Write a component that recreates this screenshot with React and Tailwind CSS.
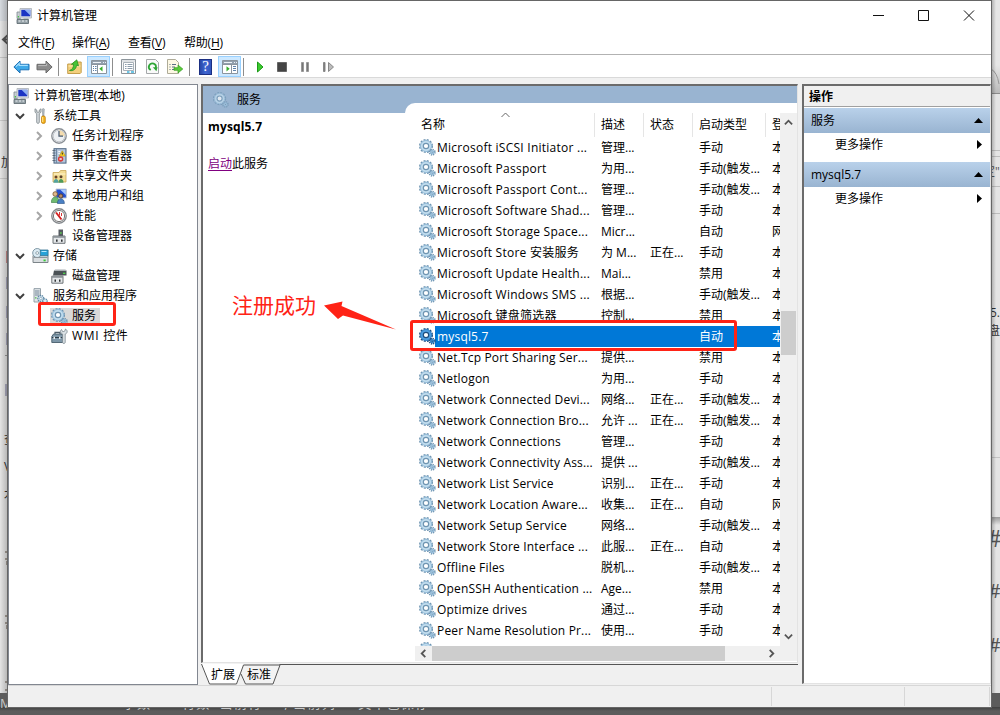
import React from "react";

const FONT = "font-['Open_Sans','Noto_Sans_CJK_SC',sans-serif]";

/* ---------- icons ---------- */

function Gear({ selected = false, faded = false, size = 17 }) {
  const ring = selected ? "#2f7fc4" : "#8fb8d6";
  const light = selected ? "#4f9fe0" : "#c3deef";
  const edge = selected ? "#1d4f80" : "#6f95b2";
  return (
    <svg width={size} height={size} viewBox="0 0 17 17" className={"block shrink-0 " + (faded ? "opacity-70" : "")}>
      <circle cx="7" cy="7" r="5.9" fill="none" stroke={edge} strokeWidth="2.2" strokeDasharray="1.9 1.19" />
      <circle cx="7" cy="7" r="4.2" fill="none" stroke={light} strokeWidth="3.2" />
      <circle cx="7" cy="7" r="5.5" fill="none" stroke={ring} strokeWidth="0.9" />
      <circle cx="7" cy="7" r="2.7" fill="#fff" stroke={edge} strokeWidth="1.2" />
      <circle cx="13.2" cy="13.2" r="2.6" fill="none" stroke={edge} strokeWidth="1.9" strokeDasharray="1.2 0.84" />
      <circle cx="13.2" cy="13.2" r="1.6" fill={light} stroke={ring} strokeWidth="1.2" />
      <circle cx="13.2" cy="13.2" r=".7" fill={edge} />
    </svg>
  );
}

function Computer() {
  return (
    <svg width="16" height="16" viewBox="0 0 16 16" className="block shrink-0">
      <path d="M1 4h3.500v6.500H1z" fill="#c9cfd4" stroke="#7d8890" strokeWidth=".8" />
      <path d="M1.800 8h1.200v1.500H1.800z" fill="#45c644" />
      <path d="M4 .5h11.500v9.500H4z" fill="#dfe3e6" stroke="#a9b0b6" strokeWidth=".8" />
      <path d="M5.300 1.800h9v6.500h-9z" fill="#1b34c4" />
      <path d="M8.500 1.800h5.800v5.700z" fill="#8fb0f2" />
      <path d="M7.500 10h5v1.500h-5z" fill="#b9bfc4" />
      <path d="M1 11.500h11.500v4H1z" fill="#96a2a8" stroke="#56636a" strokeWidth=".8" />
      <path d="M2.500 13h2M6 13h2M9.500 13h1.500" stroke="#eef2f4" />
    </svg>
  );
}

function Tools() {
  return (
    <svg width="13" height="16" viewBox="0 0 13 16" className="block shrink-0">
      <path d="M1 .8v3.400l1.700 1.600v8.400c0 1.600 2.600 1.600 2.600 0V5.800L7 4.200V.8L5.300 2v2.200H2.800V2z" fill="#d5dadd" stroke="#7c868c" strokeWidth=".8" />
      <path d="M8.300 1l1-.6 1 .6-.4 7h-1.200z" fill="#b7bec4" stroke="#7c868c" strokeWidth=".5" />
      <rect x="7.500" y="8" width="3.800" height="7.400" rx="1.400" fill="#f5b21b" stroke="#b97808" strokeWidth=".7" />
      <path d="M8.700 9v5" stroke="#ffe79a" />
    </svg>
  );
}

function Clock() {
  return (
    <svg width="16" height="16" viewBox="0 0 16 16" className="block shrink-0">
      <circle cx="8" cy="8" r="7.200" fill="#fff" stroke="#8b9096" strokeWidth="1.400" />
      <circle cx="8" cy="8" r="5.800" fill="#eef1f4" stroke="#b4bac0" strokeWidth=".8" />
      <path d="M8 8V2.300A5.700 5.700 0 0 1 13.700 8z" fill="#f4dcae" />
      <path d="M8 3v5.200h4" fill="none" stroke="#46586e" strokeWidth="1.200" />
    </svg>
  );
}

function EventViewer() {
  return (
    <svg width="15" height="16" viewBox="0 0 15 16" className="block shrink-0">
      <rect x="2" y=".7" width="12" height="14.400" fill="#b4c6dc" stroke="#4d6580" />
      <path d="M4.500 1v14" stroke="#6f88a3" />
      <path d="M.5 2.500h3M.5 5h3M.5 7.500h3M.5 10h3M.5 12.500h3" stroke="#5c6c7d" />
      <path d="M6.300 3.600h2M6.300 5.600h1.500" stroke="#fff" />
      <path d="M10.300 2.800l3 5.300H7.300z" fill="#ffd52a" stroke="#b98f00" strokeWidth=".6" />
      <path d="M10.300 4.600v2" stroke="#222" />
      <circle cx="8.600" cy="11" r="2.700" fill="#d83a36" />
      <path d="M7.600 10l2 2M9.600 10l-2 2" stroke="#fff" strokeWidth=".9" />
    </svg>
  );
}

function SharedFolder() {
  return (
    <svg width="15" height="15" viewBox="0 0 15 15" className="block shrink-0">
      <path d="M1 3.500h6L8.500 1.500H14v11.500H1z" fill="#f3dc94" stroke="#c9a655" strokeWidth=".8" />
      <path d="M2 5h11.500" stroke="#fff4cc" />
      <circle cx="4" cy="8" r="1.500" fill="#6b4528" />
      <path d="M1.500 13.800c0-5 5-5 5 0z" fill="#52a3a0" />
      <circle cx="9" cy="7.700" r="1.500" fill="#59402c" />
      <path d="M6.500 13.800c0-5 5-5 5 0z" fill="#4d9a5b" />
    </svg>
  );
}

function Users() {
  return (
    <svg width="16" height="16" viewBox="0 0 16 16" className="block shrink-0">
      <path d="M5 1h10.400v9H5z" fill="#2450cf" stroke="#c4ccd4" />
      <path d="M9 1.600h5.900v5.500z" fill="#a9c8fa" />
      <circle cx="4.200" cy="6" r="2.300" fill="#e0b98a" stroke="#79542e" strokeWidth=".8" />
      <path d="M.3 14.500c0-7.500 8-7.500 8 0z" fill="#6fba70" stroke="#357941" strokeWidth=".6" />
      <circle cx="9.800" cy="8" r="2.100" fill="#b98a5f" stroke="#4d3624" strokeWidth=".8" />
      <path d="M6.400 15.500c0-6.500 7-6.500 7 0z" fill="#4a80c4" stroke="#294f83" strokeWidth=".6" />
    </svg>
  );
}

function Perf() {
  return (
    <svg width="16" height="16" viewBox="0 0 16 16" className="block shrink-0">
      <circle cx="8" cy="8" r="7.200" fill="#fff" stroke="#85898d" strokeWidth="1.400" />
      <circle cx="8" cy="8" r="5.600" fill="#fff" stroke="#555" strokeWidth=".8" />
      <path d="M5 4.500l5.500 7" stroke="#d31f1f" strokeWidth="1.900" />
      <path d="M8.500 4v3.500M10.500 5v3" stroke="#d31f1f" strokeWidth=".9" />
    </svg>
  );
}

function DeviceManager() {
  return (
    <svg width="14" height="15" viewBox="0 0 14 15" className="block shrink-0">
      <path d="M6.500.5h4.500v6.500H6.500z" fill="#555b60" />
      <path d="M8.300 3h1.200v2H8.300z" fill="#60d253" />
      <path d="M1 7h12v7.300H1z" fill="#e4e7e9" stroke="#60666a" strokeWidth=".9" />
      <path d="M1 7h12v1.800H1z" fill="#8d9499" />
      <path d="M4 10.500h1.600v2.300H4zM9 10.500h1.600v2.300H9z" fill="#2f3336" />
    </svg>
  );
}

function Storage() {
  return (
    <svg width="17" height="16" viewBox="0 0 17 16" className="block shrink-0">
      <path d="M1 8l1.500-3H14l2 3v6.500H1z" fill="#d9dde0" stroke="#7c8489" />
      <circle cx="5.200" cy="5" r="4.500" fill="#dcebf3" stroke="#8199a6" />
      <circle cx="5.200" cy="5" r="1.400" fill="#fff" stroke="#6d8693" strokeWidth=".7" />
      <path d="M8.300 2h7.800v5.700H8.300z" fill="#27a2d8" stroke="#31708f" strokeWidth=".8" />
      <path d="M9.500 3.500h5" stroke="#b3e8ff" />
      <path d="M1.500 9.500h14" stroke="#8f979c" />
      <path d="M11.500 11.500h2.200v1.800h-2.200z" fill="#35c937" />
    </svg>
  );
}

function DiskManager() {
  return (
    <svg width="16" height="15" viewBox="0 0 16 15" className="block shrink-0">
      <path d="M3 1.500h12.500v5H2z" fill="#4b5256" />
      <path d="M3 2l1-1.500h10.500l1 1.500z" fill="#abb1b5" />
      <path d="M12 3.700h2.300v1.200H12z" fill="#50de4c" />
      <path d="M.8 7.200h11.200v7H.8z" fill="#e4e7e9" stroke="#60666a" strokeWidth=".9" />
      <path d="M.8 7.200h11.200v1.600H.8z" fill="#8d9499" />
      <path d="M3.500 10.500H5v2.300H3.500zM8 10.500h1.500v2.300H8z" fill="#2f3336" />
    </svg>
  );
}

function ServicesApps() {
  return (
    <svg width="15" height="16" viewBox="0 0 15 16" className="block shrink-0">
      <path d="M1 .6h6.500V14H1z" fill="#e0e5e8" stroke="#8b98a1" strokeWidth=".9" />
      <path d="M2 3h4.500M2 5h4.500M2 7h4.500" stroke="#74889a" />
      <path d="M2 9.200h1.500v1.400H2z" fill="#52be4d" />
      <circle cx="7.800" cy="10.500" r="3" fill="#d6e7f2" stroke="#5f89a5" strokeWidth="1.300" strokeDasharray="1.400 .7" />
      <circle cx="7.800" cy="10.500" r="1.200" fill="#fff" stroke="#6b91ab" strokeWidth=".6" />
      <circle cx="12" cy="13" r="2.200" fill="#d6e7f2" stroke="#5f89a5" strokeWidth="1.200" strokeDasharray="1.100 .6" />
    </svg>
  );
}

function Wmi() {
  return (
    <svg width="17" height="16" viewBox="0 0 17 16" className="block shrink-0">
      <path d="M4 6V4.300h5V6" fill="none" stroke="#4a5a66" strokeWidth="1.200" />
      <path d="M.8 8.500L2.500 6H11l1 2.500v6H.8z" fill="#7e97a8" stroke="#475d6c" strokeWidth=".9" />
      <path d="M1 9.500h11" stroke="#2d3e4a" />
      <path d="M2.500 8.800H4V11H2.500zM8 8.800h1.500V11H8z" fill="#e9eef1" />
      <path d="M10.500 1.500l1.200 2.300 2-.6L14.500 1c2.600 1.500 1.900 4.600-.3 5v8.500c-.2 1.300-2.600 1.300-2.600 0V6C9 5 9 2.500 10.500 1.500z" fill="#dbe2e6" stroke="#7c8990" strokeWidth=".8" />
    </svg>
  );
}

function BlueArrow() {
  return (
    <svg width="17" height="14" viewBox="0 0 17 14" className="block shrink-0">
      <path d="M.9 7L7 1v3.300h9v5.500H7V13z" fill="#3fa9e8" stroke="#1c6fb4" strokeLinejoin="round" />
      <path d="M3 6.600L6.200 3.400v2h8.600" fill="none" stroke="#a5e0ff" strokeWidth="1.100" />
    </svg>
  );
}

function GrayArrow() {
  return (
    <svg width="17" height="14" viewBox="0 0 17 14" className="block shrink-0">
      <path d="M16.100 7L10 1v3.300H1v5.500h9V13z" fill="#8c8c8c" stroke="#686868" strokeLinejoin="round" />
      <path d="M2.200 5.600h8.400v-2" fill="none" stroke="#bdbdbd" />
    </svg>
  );
}

function UpFolder() {
  return (
    <svg width="15" height="15" viewBox="0 0 15 15" className="block shrink-0">
      <path d="M.7 5h5l1.500-2h7v10.500l-1 1H.7z" fill="#f3cf7d" stroke="#c0963f" strokeWidth=".9" />
      <path d="M1.500 7h12" stroke="#ffebae" />
      <path d="M2.500 11.500c3-1 4-3 4-6.200H4.400L9.800.8l1.700 6-1.800-.6c-.6 3.500-3 6.300-7.200 5.300z" fill="#47c436" stroke="#218a18" strokeWidth=".7" />
    </svg>
  );
}

function PaneIcon({ flip = false }) {
  return (
    <svg width="16" height="14" viewBox="0 0 16 14" className="block shrink-0">
      <path d="M.5.5h15v13H.5z" fill="#fff" stroke="#8a949d" />
      <path d="M1 1h14v3H1z" fill="#93a0ad" />
      <path d="M2 2.500h8M12 2.500h1M14 2.500h1" stroke="#eef3f7" />
      {flip ? (
        <>
          <path d="M9.500 4v9.500M1 4.500h14" stroke="#8a949d" />
          <path d="M4.500 6.200v5.200L7.700 8.800z" fill="#37ae2c" />
          <path d="M11 6.500h3M11 8.500h3M11 10.500h3" stroke="#5f83ab" />
        </>
      ) : (
        <>
          <path d="M6.500 4v9.500M1 4.500h14" stroke="#8a949d" />
          <path d="M11.500 6.200v5.200L8.300 8.800z" fill="#37ae2c" />
          <path d="M2 6.500h1M4 6.500h1.500M2 8.500h1M4 8.500h1.500M2 10.500h1M4 10.500h1.500" stroke="#5f83ab" />
        </>
      )}
    </svg>
  );
}

function Properties() {
  return (
    <svg width="15" height="15" viewBox="0 0 15 15" className="block shrink-0">
      <path d="M.5.5h14v14H.5z" fill="#fbfbfb" stroke="#8d959b" />
      <path d="M1 2h13" stroke="#c3c9ce" />
      <path d="M2.500 3.500h10v8h-10z" fill="#fff" stroke="#a8b1b8" />
      <path d="M4 5.500h1.500M6.500 5.500h5M4 7.500h1.500M6.500 7.500h5M4 9.500h1.500M6.500 9.500h5" stroke="#8c9dac" />
      <path d="M6 13h2.500M10 13h3" stroke="#3fb5e0" strokeWidth="1.300" />
    </svg>
  );
}

function Refresh() {
  return (
    <svg width="13" height="15" viewBox="0 0 13 15" className="block shrink-0">
      <path d="M.5.5h9l3 3v11H.5z" fill="#fafafa" stroke="#a5a8aa" />
      <path d="M4.700 11A3.500 3.500 0 1 1 9.700 9" fill="none" stroke="#2fa637" strokeWidth="1.800" />
      <path d="M6.800 8.200h4.800l-1.200 4z" fill="#2fa637" />
    </svg>
  );
}

function Export() {
  return (
    <svg width="17" height="15" viewBox="0 0 17 15" className="block shrink-0">
      <path d="M.5.5h8l3 3v11H.5z" fill="#fdf8e4" stroke="#aeab98" />
      <path d="M2.500 5.500h1M5 5.500h4M2.500 8h1M5 8h3M2.500 10.500h1M5 10.500h4" stroke="#5b6e86" />
      <path d="M7 8.700h4V6l4.800 4-4.800 4v-2.700H7z" fill="#5ccc3b" stroke="#309b21" strokeWidth=".7" />
    </svg>
  );
}

function Help() {
  return (
    <span className="flex h-4 w-[13px] items-center justify-center border border-[#1b2f82] bg-linear-to-r from-[#2848a8] via-[#3f66d2] to-[#3156bd] font-['Liberation_Serif',serif] text-[15px] leading-none text-white">
      ?
    </span>
  );
}

function Chevron({ dir, color = "#555", w = 9 }) {
  const paths = {
    down: "M1 3l4 4 4-4",
    up: "M1 7l4-4 4 4",
    right: "M3 1l4 4-4 4",
    left: "M7 1L3 5l4 4",
  };
  return (
    <svg width={w} height={w} viewBox="0 0 10 10" className="block shrink-0">
      <path d={paths[dir]} fill="none" stroke={color} strokeWidth="2" />
    </svg>
  );
}

/* ---------- backdrop seen round the window ---------- */

function Backdrop() {
  return (
    <div className="absolute inset-0 overflow-hidden bg-[#e4e4e4] text-[12px] leading-4 text-[#333]">
      <div className="absolute top-0 left-0 h-[21px] w-2 bg-[#d6dadf]" />
      <div className="absolute top-0 left-2 h-px w-[992px] bg-[#55504f]" />
      <svg className="absolute top-[33px] left-px" width="8" height="13" viewBox="0 0 8 13">
        <path d="M8 1L2 6.500 8 12M2 6.500h6" fill="none" stroke="#555" strokeWidth="2" />
      </svg>
      <div className="absolute top-[57px] left-0 h-px w-2 bg-[#c4c4c4]" />
      <div className="absolute top-[120px] left-0 h-px w-2 bg-[#c8c8c8]" />
      <div className="absolute top-[155px] left-px">加</div>
      <div className="absolute top-[178px] left-0 h-px w-2 bg-[#c8c8c8]" />
      <div className="absolute top-[251px] left-[6px] h-3 w-px bg-[#c78b8b]" />
      <div className="absolute top-[277px] left-[6px] h-3 w-px bg-[#a7a7bd]" />
      <div className="absolute top-[306px] left-[6px] h-3 w-px bg-[#a7a7bd]" />
      <div className="absolute top-[333px] left-[6px] h-3 w-px bg-[#a7a7bd]" />
      <div className="absolute top-[355px] left-[5px] h-px w-[3px] bg-[#999]" />
      <div className="absolute top-[384px] left-[5px] h-3 w-[3px] bg-[#a9a9bd]" />
      <div className="absolute top-[432px] left-[4px]">查</div>
      <div className="absolute top-[459px] left-[4px]">V</div>
      <div className="absolute top-[487px] left-[4px]">木</div>
      <div className="absolute top-[551px] left-[5px] h-[2px] w-[3px] bg-[#a39c94]" />
      <div className="absolute top-[558px] left-[5px] h-[2px] w-[3px] bg-[#a39c94]" />
      <div className="absolute top-[561px] left-[6px] h-1 w-px bg-[#a39c94]" />
      <div className="absolute top-[615px] left-[5px] h-[2px] w-[3px] bg-[#a39c94]" />
      <div className="absolute top-[622px] left-[5px] h-[2px] w-[3px] bg-[#a39c94]" />
      <div className="absolute top-[625px] left-[6px] h-1 w-px bg-[#a39c94]" />
      <div className="absolute top-[681px] left-[5px] h-[2px] w-[3px] bg-[#a39c94]" />
      <div className="absolute top-[689px] left-[5px] h-[2px] w-[3px] bg-[#a39c94]" />
      <div className="absolute top-0 left-0 h-[693px] w-2 bg-linear-to-r from-transparent to-[#00000038]" />

      <div className="absolute top-0 right-0 h-[94px] w-[9px] border-b border-[#8b8b8b] bg-linear-to-b from-[#e6e6e6] from-70% to-[#bababa]" />
      <svg className="absolute top-[66px] left-[991px]" width="9" height="20" viewBox="0 0 9 20">
        <path d="M0 3Q6 6 8 18" fill="none" stroke="#999" />
      </svg>
      <div className="absolute top-[150px] right-0 h-px w-[9px] bg-[#bdbdbd]" />
      <div className="absolute top-[156px] right-0 h-px w-[9px] bg-[#bdbdbd]" />
      <div className="absolute top-[164px] left-[983px] text-[#555]">定"</div>
      <div className="absolute top-[186px] right-0 h-px w-[9px] bg-[#bdbdbd]" />
      <div className="absolute top-[213px] right-0 h-px w-[9px] bg-[#bdbdbd]" />
      <div className="absolute top-[305px] left-[990px] text-[12px]">5.</div>
      <div className="absolute top-[323px] left-[988px]">盘</div>
      <div className="absolute top-[457px] right-0 h-px w-[9px] bg-[#c4c4c4]" />
      <div className="absolute top-[517px] right-0 h-2 w-[9px] bg-linear-to-b from-[#999] to-[#e4e4e4]" />
      <div className="absolute top-[526px] left-[987px] text-[23px] leading-6 text-[#555]">#</div>
      <div className="absolute top-[579px] left-[988px] text-[20px] leading-6 text-[#555]">#</div>
      <div className="absolute top-[633px] left-[988px] text-[20px] leading-6 text-[#555]">#</div>
      <div className="absolute top-0 left-[991px] h-[693px] w-[5px] bg-linear-to-r from-[#00000045] to-transparent" />

      <div className="absolute right-0 bottom-0 left-0 h-[22px] bg-[#5c5c5c]" />
      <div className="absolute right-0 bottom-0 left-0 h-2 bg-linear-to-b from-[#00000050] to-transparent to-50%" />
      <div className="absolute top-[695px] left-0 text-[13px] tracking-[1.2px] whitespace-nowrap text-[#c8c8c8]">
        Markdown&nbsp; 1850 字数&nbsp; 60 行数&nbsp; 当前行 60, 当前列 0&nbsp; 文章已保存15:04:40
      </div>
    </div>
  );
}

/* ---------- window chrome ---------- */

function TitleBar() {
  return (
    <div className="flex h-[29px] shrink-0 items-center bg-white pl-2">
      <Computer />
      <span className="ml-[5px] grow text-[12px]">计算机管理</span>
      <svg width="120" height="29" viewBox="0 0 120 29" className="block shrink-0">
        <path d="M2 14.500h11M47.500 9.500h10v10h-10zM93 9.500l10 10M103 9.500l-10 10" fill="none" stroke="#111" />
      </svg>
    </div>
  );
}

function MenuItem({ label, hotkey, className = "w-10" }) {
  return (
    <span className={"whitespace-nowrap tracking-[-0.2px] " + className}>
      {label}(<u className="underline-offset-2">{hotkey}</u>)
    </span>
  );
}

function MenuBar() {
  return (
    <div className="flex h-6 shrink-0 items-center gap-4 bg-white pt-[2px] pl-[10px] text-[12px]">
      <MenuItem label="文件" hotkey="F" className="w-[38px]" />
      <MenuItem label="操作" hotkey="A" />
      <MenuItem label="查看" hotkey="V" />
      <MenuItem label="帮助" hotkey="H" />
    </div>
  );
}

function Divider({ className }) {
  return <span className={"h-[18px] w-px shrink-0 bg-[#8d8d8d] " + className} />;
}

function ToolBar() {
  return (
    <div className="flex h-[24px] shrink-0 items-center border-t border-b border-t-[#b2b2b2] border-b-[#d9d9d9] bg-white pt-px">
      <span className="ml-[5px]"><BlueArrow /></span>
      <span className="ml-[6px]"><GrayArrow /></span>
      <Divider className="ml-[5px]" />
      <span className="ml-[8px]"><UpFolder /></span>
      <span className="ml-[5px] flex h-[21px] w-[23px] items-center justify-center border border-[#99d1ff] bg-[#cce8ff]">
        <PaneIcon />
      </span>
      <Divider className="ml-[2px]" />
      <span className="ml-2"><Properties /></span>
      <span className="ml-[10px]"><Refresh /></span>
      <span className="ml-2"><Export /></span>
      <Divider className="ml-[5px]" />
      <span className="ml-[9px]"><Help /></span>
      <span className="ml-[6px] flex h-[21px] w-[23px] items-center justify-center border border-[#99d1ff] bg-[#cce8ff]">
        <PaneIcon flip />
      </span>
      <Divider className="ml-[2px]" />
      <svg width="90" height="14" viewBox="0 0 90 14" className="ml-3 block shrink-0">
        <path d="M1.500 2v10l5.500-5z" fill="#3ccb2e" stroke="#1b9a17" />
        <path d="M21.500 2.500h9v9h-9z" fill="#444" stroke="#666" />
        <path d="M45.500 2.500h2v9h-2zM50.500 2.500h2v9h-2z" fill="#777" stroke="#999" />
        <path d="M67.500 2.500h1.500v9h-1.500z" fill="#777" stroke="#888" />
        <path d="M72.500 2.500v9l5-4.500z" fill="#bbb" stroke="#888" />
      </svg>
    </div>
  );
}

/* ---------- tree ---------- */

const TREE = [
  { label: "系统工具", icon: Tools, level: 0, open: true },
  { label: "任务计划程序", icon: Clock, level: 1, arrow: true },
  { label: "事件查看器", icon: EventViewer, level: 1, arrow: true },
  { label: "共享文件夹", icon: SharedFolder, level: 1, arrow: true },
  { label: "本地用户和组", icon: Users, level: 1, arrow: true },
  { label: "性能", icon: Perf, level: 1, arrow: true },
  { label: "设备管理器", icon: DeviceManager, level: 1 },
  { label: "存储", icon: Storage, level: 0, open: true },
  { label: "磁盘管理", icon: DiskManager, level: 1 },
  { label: "服务和应用程序", icon: ServicesApps, level: 0, open: true },
  { label: "服务", icon: Gear, level: 1, selected: true },
  { label: "WMI 控件", icon: Wmi, level: 1, wide: true },
];

function Tree() {
  return (
    <div className="h-[601px] w-[190px] shrink-0 border border-[#828790] bg-white pt-px text-[12px]">
      <div className="flex h-5 items-center pl-1">
        <Computer />
        <span className="ml-[5px] tracking-[-0.05px]">计算机管理(本地)</span>
      </div>
      {TREE.map(({ label, icon: Icon, level, open, arrow, selected, wide }) => (
        <div key={label} className={"flex h-5 items-center " + (level ? "pl-[25px]" : "pl-[6px]")}>
          <span className="flex w-[10px] shrink-0 justify-center">
            {open && <Chevron dir="down" color="#404040" w={10} />}
            {arrow && <Chevron dir="right" color="#a6a6a6" w={10} />}
          </span>
          <span
            className={
              "flex h-4 shrink-0 items-center justify-center " +
              (level ? "ml-[6px] w-[18px] " : "ml-[6px] w-[19px] ") +
              (selected ? "bg-[#d9d9d9]" : "")
            }
          >
            <Icon />
          </span>
          <span
            className={
              "flex h-4 items-center pr-1 whitespace-nowrap " +
              (level ? "pl-[4px] " : "pl-[3px] ") +
              (wide ? "tracking-[0.7px] " : "") +
              (selected ? "bg-[#d9d9d9]" : "")
            }
          >
            {label}
          </span>
        </div>
      ))}
    </div>
  );
}

/* ---------- services list ---------- */

const M = "手动";
const MT = "手动(触发...";
const A = "自动";
const D = "禁用";
const R = "正在...";

const ROWS = [
  ["Microsoft iSCSI Initiator ...", "管理...", "", M, "本"],
  ["Microsoft Passport", "为用...", "", MT, "本"],
  ["Microsoft Passport Cont...", "管理...", "", MT, "本"],
  ["Microsoft Software Shad...", "管理...", "", M, "本"],
  ["Microsoft Storage Space...", "Micr...", "", A, "网"],
  ["Microsoft Store 安装服务", "为 M...", R, M, "本"],
  ["Microsoft Update Health...", "Mai...", "", D, "本"],
  ["Microsoft Windows SMS ...", "根据...", "", MT, "本"],
  ["Microsoft 键盘筛选器", "控制...", "", D, "本"],
  ["mysql5.7", "", "", A, "本"],
  ["Net.Tcp Port Sharing Ser...", "提供...", "", D, "本"],
  ["Netlogon", "为用...", "", M, "本"],
  ["Network Connected Devi...", "网络...", R, MT, "本"],
  ["Network Connection Bro...", "允许 ...", R, MT, "本"],
  ["Network Connections", "管理...", "", M, "本"],
  ["Network Connectivity Ass...", "提供 ...", "", MT, "本"],
  ["Network List Service", "识别...", R, M, "本"],
  ["Network Location Aware...", "收集...", R, A, "网"],
  ["Network Setup Service", "网络...", "", MT, "本"],
  ["Network Store Interface ...", "此服...", R, A, "本"],
  ["Offline Files", "脱机...", "", MT, "本"],
  ["OpenSSH Authentication ...", "Age...", "", D, "本"],
  ["Optimize drives", "通过...", "", M, "本"],
  ["Peer Name Resolution Pr...", "使用...", "", M, "本"],
];

const COLS = "grid grid-cols-[180px_49px_49px_73px_14px]";

function ServiceList() {
  return (
    <div className="flex h-[533px] w-[365px] flex-col overflow-hidden text-[12px]">
      <div className={COLS + " h-6 shrink-0 items-center"}>
        <span className="relative flex h-6 items-center border-r border-[#e5e5e5] pl-[6px]">
          名称
          <svg className="absolute top-[-1px] left-[86px]" width="9" height="6" viewBox="0 0 9 6">
            <path d="M.5 5l4-4 4 4" fill="none" stroke="#666" />
          </svg>
        </span>
        <span className="flex h-6 items-center border-r border-[#e5e5e5] pl-[6px]">描述</span>
        <span className="flex h-6 items-center border-r border-[#e5e5e5] pl-[6px]">状态</span>
        <span className="flex h-6 items-center border-r border-[#e5e5e5] pl-[6px]">启动类型</span>
        <span className="flex h-6 w-[14px] items-center overflow-hidden pl-[6px]">登</span>
      </div>
      {ROWS.map(([name, desc, state, start, logon]) => {
        const sel = name === "mysql5.7";
        return (
          <div
            key={name}
            className={
              COLS +
              " h-[21px] shrink-0 items-center whitespace-nowrap " +
              (sel ? "bg-[linear-gradient(to_right,#fff_20px,#0078d7_20px)] text-white" : "")
            }
          >
            <span className="flex items-center pl-[4px]">
              <Gear selected={sel} />
              <span className={"ml-px " + (name.startsWith("Micro") ? "tracking-[0.25px]" : "tracking-[0.18px]")}>{name}</span>
            </span>
            <span className="pl-[6px]">{desc}</span>
            <span className="pl-[6px]">{state}</span>
            <span className="pl-[6px]">{start}</span>
            <span className="w-[14px] overflow-hidden pl-[6px]">{logon}</span>
          </div>
        );
      })}
      <div className="shrink-0 pt-px pl-[4px]">
        <Gear />
      </div>
    </div>
  );
}

function ServicesPane() {
  return (
    <div className="flex w-[597px] shrink-0 flex-col">
      <div className="flex h-[579px] border-t-2 border-r border-b border-l-2 border-t-[#6b6b6b] border-r-[#e3e3e3] border-b-[#e3e3e3] border-l-[#6b6b6b] bg-white">
        <div className="flex w-[202px] shrink-0 flex-col">
          <div className="flex h-[27px] items-center bg-[#99b4d1] pl-[10px] text-[12px]">
            <Gear size={16} faded />
            <span className="ml-[8px]">服务</span>
          </div>
          <div className="pt-[6px] pl-[5px] text-[12px] leading-4 font-bold tracking-[0.15px]">mysql5.7</div>
          <div className="pt-[21px] pl-[5px] text-[12px] leading-4">
            <span className="text-[#800080] underline underline-offset-2">启动</span>此服务
          </div>
        </div>
        <div className="flex w-[392px] shrink-0 flex-col bg-[#99b4d1] pt-[17px]">
          <div className="flex grow flex-col rounded-tl-[10px] bg-white pt-[10px]">
            <div className="flex">
              <div className="ml-[10px] shrink-0">
                <ServiceList />
              </div>
              <div className="flex h-[533px] w-[17px] flex-col items-center bg-[#f0f0f0] pt-[5px]">
                <Chevron dir="up" />
                <div className="mt-[184px] h-11 w-[15px] bg-[#cdcdcd]" />
                <div className="mt-[277px]">
                  <Chevron dir="down" />
                </div>
              </div>
            </div>
            <div className="ml-[10px] flex h-[15px] items-center bg-[#f0f0f0] pl-[4px]">
              <Chevron dir="left" />
              <div className="ml-1 h-[15px] w-[293px] bg-[#cdcdcd]" />
              <div className="ml-[42px]">
                <Chevron dir="right" />
              </div>
            </div>
          </div>
        </div>
      </div>
      <div className="relative h-[22px] text-[12px]">
        <svg width="597" height="22" viewBox="0 0 597 22" className="absolute top-0 left-0">
          <path d="M0 .5l8 20.500h27.500l7.500-20z" fill="#fff" />
          <path d="M43 1.500h36l-7 19.500H44l-4-9z" fill="#f3f3f3" />
          <path d="M.5 1l8 20h27l7-19h36.500l-7 19H44.500l-4.500-10M78.500 1.500H597" fill="none" stroke="#555" />
        </svg>
        <div className="relative flex h-[22px] items-center pt-[2px]">
          <span className="ml-[10px]">扩展</span>
          <span className="ml-3">标准</span>
        </div>
      </div>
    </div>
  );
}

/* ---------- actions ---------- */

function ActionGroup({ title, tall }) {
  return (
    <>
      <div className="flex h-[25px] items-center justify-between bg-linear-to-b from-[#b9d1ea] to-[#99b4d1] pr-[7px] pl-[7px]">
        <span>{title}</span>
        <svg width="9" height="5" viewBox="0 0 9 5"><path d="M0 5l4.500-5L9 5z" /></svg>
      </div>
      <div className={"flex items-start justify-between pt-1 pr-[8px] pl-[31px] " + (tall ? "h-[29px]" : "h-6")}>
        <span className="leading-4">更多操作</span>
        <svg className="mt-[3px]" width="5" height="9" viewBox="0 0 5 9"><path d="M0 0l5 4.500L0 9z" /></svg>
      </div>
    </>
  );
}

function Actions() {
  return (
    <div className="h-[600px] w-[189px] shrink-0 border-t-2 border-r border-b border-l-2 border-t-[#6b6b6b] border-r-[#e3e3e3] border-b-[#e3e3e3] border-l-[#6b6b6b] bg-white text-[12px]">
      <div className="mb-px flex h-[21px] items-center border-b border-[#a0a0a0] bg-[#f0f0f0] pt-px pl-[5px] font-bold">操作</div>
      <ActionGroup title="服务" tall />
      <ActionGroup title="mysql5.7" />
    </div>
  );
}

function StatusBar() {
  return (
    <div className="flex grow items-stretch border-t border-[#d7d7d7] bg-[#f0f0f0] py-px">
      <div className="w-[764px] border-r border-[#d7d7d7]" />
      <div className="w-[133px] border-r border-[#d7d7d7]" />
      <div className="w-[85px] border-r border-[#d7d7d7]" />
    </div>
  );
}

/* ---------- annotations ---------- */

function Annotations() {
  return (
    <>
      <div className="absolute top-[302px] left-[38px] h-[24px] w-[78px] rounded-[3px] border-[3px] border-[#ff2316]" />
      <div className="absolute top-[320px] left-[410px] h-[31px] w-[327px] rounded-[3px] border-[3px] border-[#ff2316]" />
      <div className="absolute top-[291px] left-[232px] text-[21px] leading-7 text-[#ff2316]">注册成功</div>
      <svg className="absolute top-[300px] left-[323px]" width="74" height="32" viewBox="0 0 74 32">
        <path d="M1 5.500L19.500 1.500l-1 4.500L73 29.500 20 15.500l-5 3.500z" fill="#ff2316" />
      </svg>
    </>
  );
}

export default function App() {
  return (
    <div className={"relative h-[715px] w-[1000px] overflow-hidden pt-px pl-[8px] text-black " + FONT}>
      <Backdrop />
      <div className="relative flex h-[706px] w-[983px] flex-col bg-[#f0f0f0] shadow-[0_0_0_1px_#666]">
        <TitleBar />
        <MenuBar />
        <ToolBar />
        <div className="flex h-[607px] shrink-0 pt-[6px]">
          <Tree />
          <div className="ml-[3px] flex">
            <ServicesPane />
          </div>
          <div className="ml-1 flex">
            <Actions />
          </div>
        </div>
        <StatusBar />
      </div>
      <Annotations />
    </div>
  );
}
